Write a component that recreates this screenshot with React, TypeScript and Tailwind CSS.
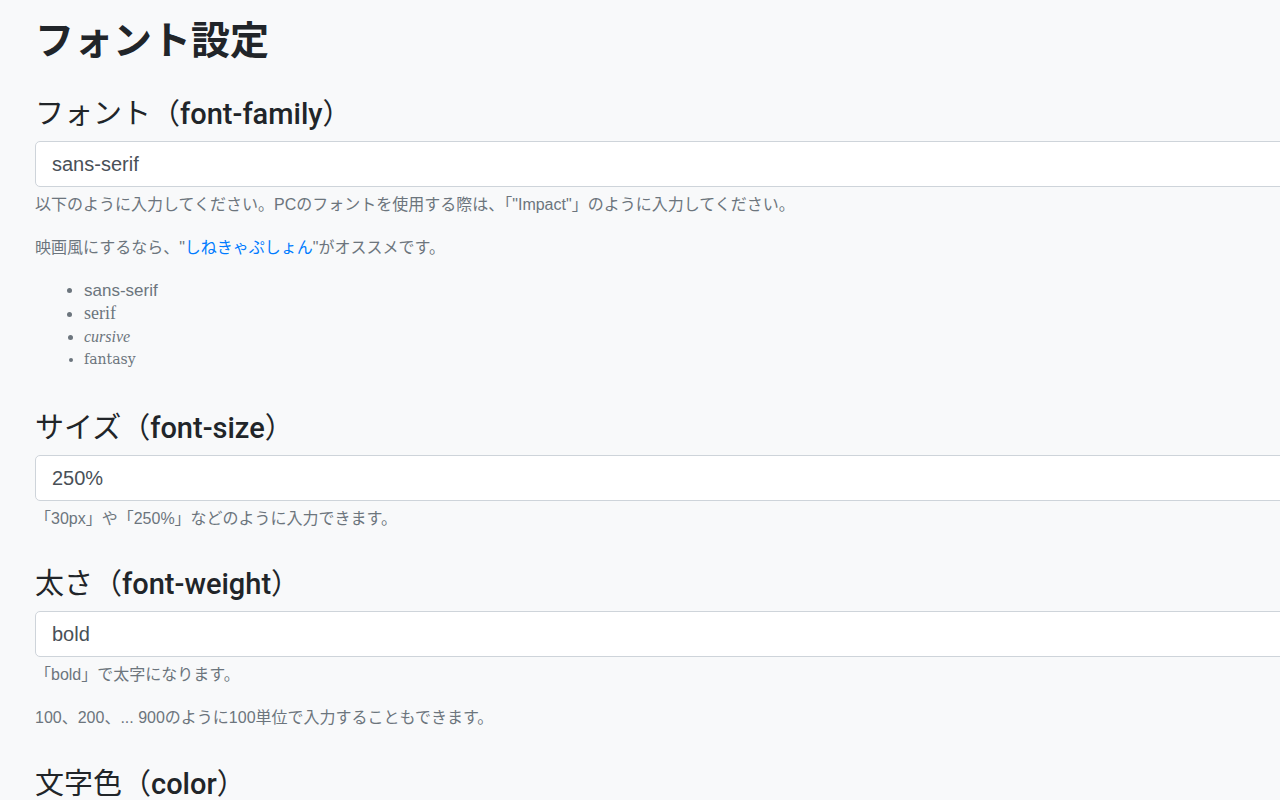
const base = { fontFamily: '"Liberation Sans", "Noto Sans CJK JP", sans-serif' }
const latin = { fontFamily: 'Roboto, "Liberation Sans", sans-serif' }

function Heading({ ja, en }: { ja: string; en: string }) {
  return (
    <h3 className="pt-[1px] text-[29px] leading-[34px] font-normal text-[#212529]">
      {ja}（<span className="font-medium" style={latin}>{en}</span>）
    </h3>
  )
}

function Field({ value }: { value: string }) {
  return (
    <div className="mt-[10px] h-[46px] w-[1320px] rounded-[5px] border border-[#ced4da] bg-white px-4 flex items-center text-[20px] text-[#495057]">
      {value}
    </div>
  )
}

function Help({ children, first }: { children: React.ReactNode; first?: boolean }) {
  return (
    <p className={(first ? 'mt-[6px]' : 'mt-[19px]') + ' text-[16px] leading-[24px] text-[#6c757d]'}>
      {children}
    </p>
  )
}

const families = [
  { label: 'sans-serif', font: '"Liberation Sans", sans-serif', cls: 'text-[17px]' },
  { label: 'serif', font: '"Liberation Serif", serif', cls: 'text-[18px]' },
  { label: 'cursive', font: '"Liberation Serif", serif', cls: 'text-[16px] italic' },
  { label: 'fantasy', font: '"DejaVu Serif", serif', cls: 'text-[14px] font-light' },
]

export default function App() {
  return (
    <div className="h-[800px] w-full overflow-hidden bg-[#f8f9fa]" style={base}>
      <div className="pl-[35px] pt-[17px]">
        <h1 className="text-[39px] leading-[48px] font-bold text-[#212529]">フォント設定</h1>

        <section className="mt-[31px]">
          <Heading ja="フォント" en="font-family" />
          <Field value="sans-serif" />
          <Help first>以下のように入力してください。PCのフォントを使用する際は、「"Impact"」のように入力してください。</Help>
          <Help>
            映画風にするなら、"<a className="text-[#007bff]">しねきゃぷしょん</a>"がオススメです。
          </Help>
          <ul className="mt-[19px] list-disc pl-[49px] text-[#6c757d] marker:text-[#6c757d]">
            {families.map((f) => (
              <li key={f.label} className={'leading-[23px] ' + f.cls} style={{ fontFamily: f.font }}>
                {f.label}
              </li>
            ))}
          </ul>
        </section>

        <section className="mt-[39px]">
          <Heading ja="サイズ" en="font-size" />
          <Field value="250%" />
          <Help first>「30px」や「250%」などのように入力できます。</Help>
        </section>

        <section className="mt-[35px]">
          <Heading ja="太さ" en="font-weight" />
          <Field value="bold" />
          <Help first>「bold」で太字になります。</Help>
          <Help>100、200、... 900のように100単位で入力することもできます。</Help>
        </section>

        <section className="mt-[36px]">
          <Heading ja="文字色" en="color" />
        </section>
      </div>
    </div>
  )
}
